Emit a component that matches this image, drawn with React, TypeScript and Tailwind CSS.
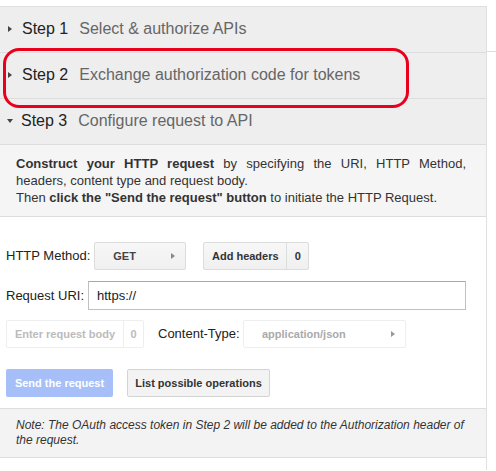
import React from 'react';

const steps = [
  { n: 1, title: 'Select & authorize APIs', open: false },
  { n: 2, title: 'Exchange authorization code for tokens', open: false },
  { n: 3, title: 'Configure request to API', open: true },
];

function Caret({ open, color = 'border-l-[#444]' }: { open?: boolean; color?: string }) {
  if (open) {
    return <span className="inline-block w-0 h-0 border-x-[3.5px] border-x-transparent border-t-[4px] border-t-[#444]" />;
  }
  return <span className={`inline-block w-0 h-0 border-y-[3.5px] border-y-transparent border-l-[4px] ${color}`} />;
}

export default function App() {
  return (
    <div className="w-[496px] h-[471px] bg-white flex font-['Liberation_Sans',Arial,sans-serif] overflow-hidden">
      {/* panel */}
      <div className="relative w-[487px] mt-[6px] border-t border-r border-[#e0e0e0] h-[464px] flex flex-col">
        {steps.map((s) => (
          <div
            key={s.n}
            className="h-[46px] bg-[#eeeeee] border-b border-[#dddddd] flex items-center pl-[8px] pb-[1px] text-[16px] shrink-0"
          >
            <span className={`w-[7px] flex ${s.open ? '-ml-[1px] mr-[7px]' : 'mr-[7px]'}`}>
              <Caret open={s.open} />
            </span>
            <span className="text-[#222] mr-[11px]">Step {s.n}</span>
            <span className="text-[#666]">{s.title}</span>
          </div>
        ))}

        {/* description */}
        <div className="bg-[#f5f5f5] border-b border-[#dddddd] pt-[10px] pb-[10px] pl-[16px] pr-[20px] text-[13px] leading-[17px] text-[#333] shrink-0">
          <p className="text-justify [text-align-last:left]">
            <b>Construct your HTTP request</b> by specifying the URI, HTTP Method, headers, content type and request body.
          </p>
          <p>
            Then <b>click the "Send the request" button</b> to initiate the HTTP Request.
          </p>
        </div>

        {/* form */}
        <div className="px-[6px] pt-[25px] flex flex-col text-[13px] text-[#222] shrink-0">
          <div className="flex items-center h-[28px]">
            <span className="mr-[4px]">HTTP Method:</span>
            <div className="w-[92px] h-[28px] bg-gradient-to-b from-[#f7f7f7] to-[#f0f0f0] border border-[#dcdcdc] rounded-[2px] flex items-center pl-[18px] pr-[10px] justify-between">
              <span className="text-[11px] font-bold text-[#444]">GET</span>
              <Caret color="border-l-[#888]" />
            </div>
            <div className="ml-[17px] h-[28px] flex border border-[#dcdcdc] rounded-[2px] bg-gradient-to-b from-[#f7f7f7] to-[#f0f0f0] text-[11px] font-bold text-[#333]">
              <span className="w-[83px] flex items-center justify-center border-r border-[#dcdcdc]">Add headers</span>
              <span className="w-[21px] flex items-center justify-center">0</span>
            </div>
          </div>

          <div className="flex items-center h-[29px] mt-[11px]">
            <span className="w-[82px]">Request URI:</span>
            <div className="w-[378px] h-[29px] border border-[#c0c0c0] border-t-[#a8a8a8] bg-white flex items-center pl-[8px]">
              https://
            </div>
          </div>

          <div className="flex items-center h-[28px] mt-[10px]">
            <div className="w-[138px] h-[28px] flex border border-[#eeeeee] rounded-[2px] bg-white text-[11px] font-bold text-[#bbbbbb]">
              <span className="w-[117px] flex items-center justify-center border-r border-[#eeeeee]">Enter request body</span>
              <span className="flex-1 flex items-center justify-center">0</span>
            </div>
            <span className="ml-[14px] w-[85px]">Content-Type:</span>
            <div className="w-[163px] h-[28px] border border-[#eeeeee] rounded-[2px] bg-white flex items-center pl-[18px] pr-[10px] justify-between">
              <span className="text-[11px] font-bold text-[#aaaaaa]">application/json</span>
              <Caret color="border-l-[#999]" />
            </div>
          </div>

          <div className="flex items-center h-[28px] mt-[21px] text-[11px] font-bold">
            <div className="w-[107px] h-[28px] bg-[#a6bff8] rounded-[2px] text-white flex items-center justify-center">
              Send the request
            </div>
            <div className="ml-[14px] w-[143px] h-[28px] bg-[#f3f3f3] border border-[#d4d4d4] rounded-[2px] text-[#333] flex items-center justify-center">
              List possible operations
            </div>
          </div>
        </div>

        {/* note */}
        <div className="mt-[11px] bg-[#f3f3f3] border-y border-[#dddddd] pt-[9px] pb-[10px] pl-[16px] pr-[18px] text-[12px] leading-[14.5px] italic text-[#333] shrink-0">
          Note: The OAuth access token in Step 2 will be added to the Authorization header of the request.
        </div>

        {/* annotation */}
        <div className="absolute left-[3px] top-[41px] w-[406px] h-[60px] border-[3px] border-[#e8001c] rounded-[16px] pointer-events-none" />
      </div>

      {/* right gutter */}
      <div className="flex-1">
        <div className="h-[52px] border-b border-[#dddddd]" />
      </div>
    </div>
  );
}
